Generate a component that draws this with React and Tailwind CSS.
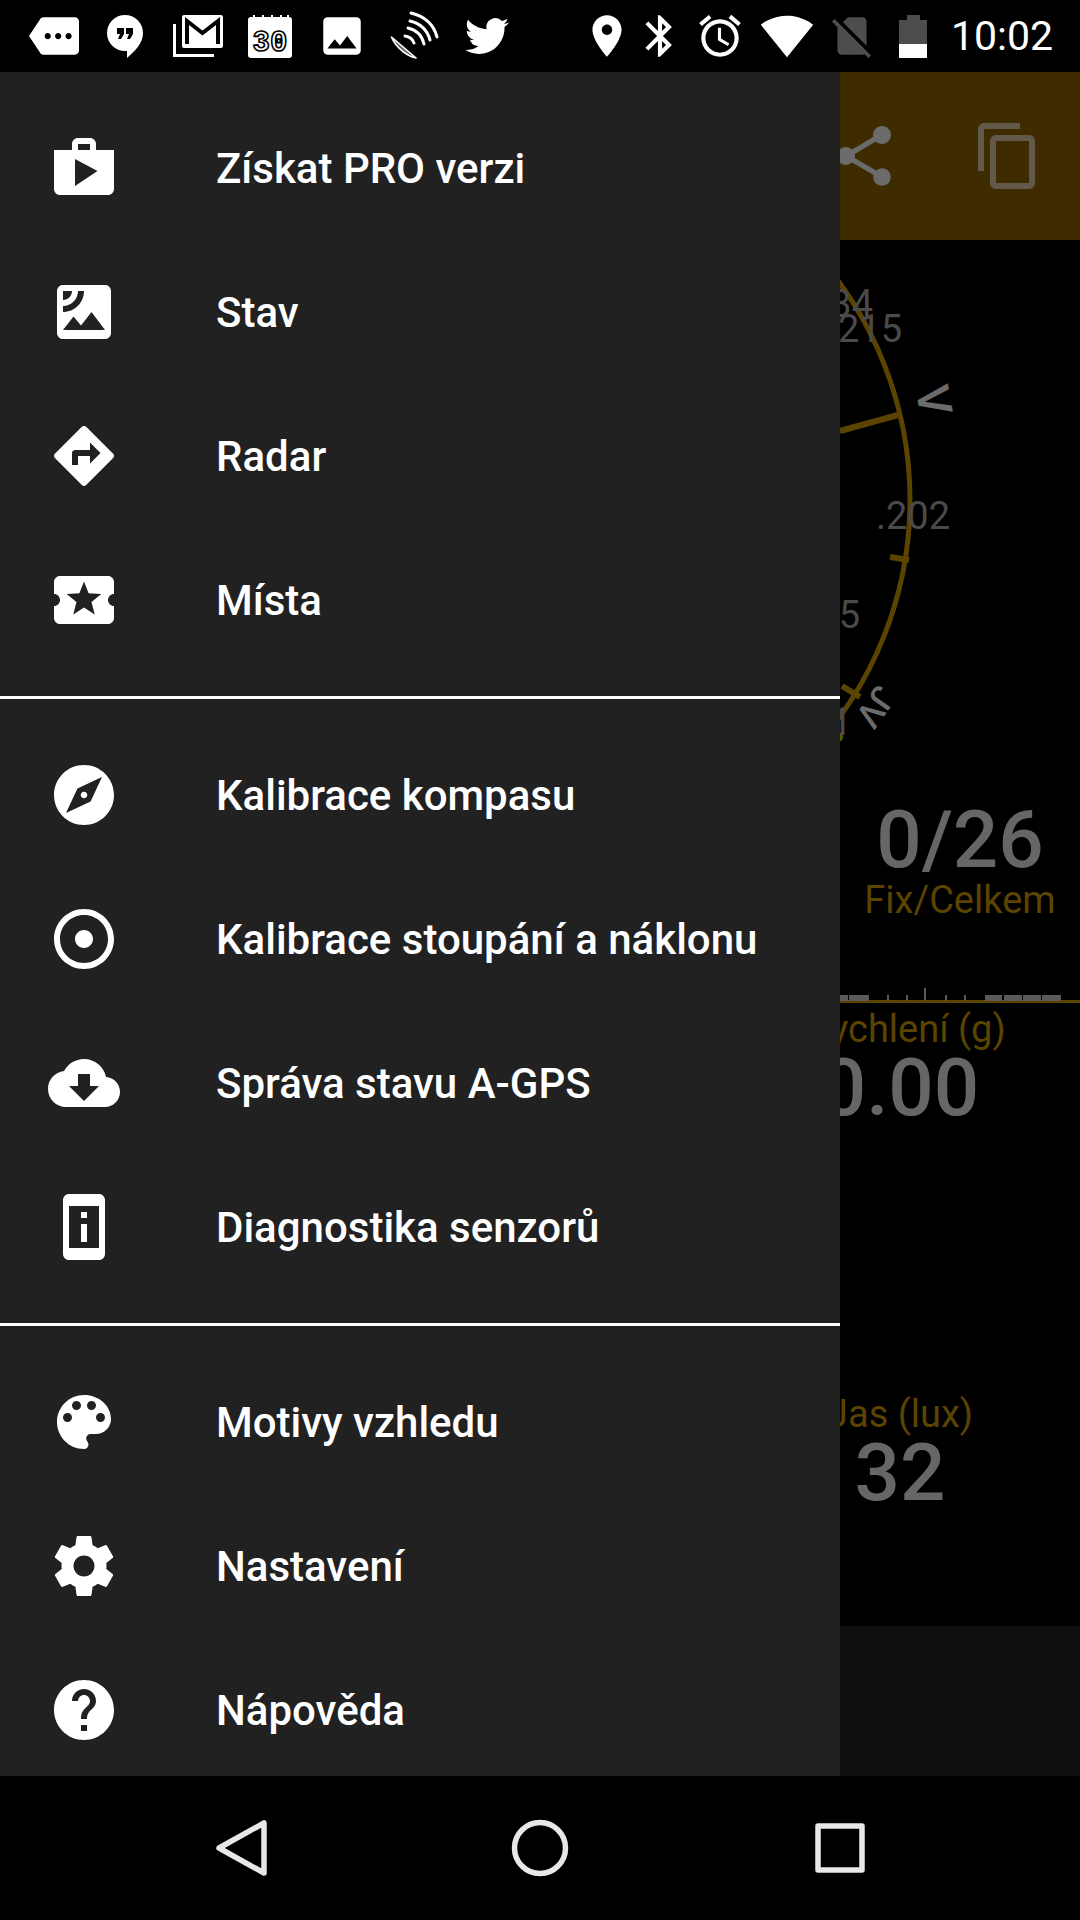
import React from "react";

const ICONS = {
  shop: "M16 6V4c0-1.11-.89-2-2-2h-4c-1.11 0-2 .89-2 2v2H2v13c0 1.11.89 2 2 2h16c1.11 0 2-.89 2-2V6h-6zm-6-2h4v2h-4V4zM9 18V9l7.5 4L9 18z",
  satellite: "M19 3H5c-1.1 0-2 .9-2 2v14c0 1.1.9 2 2 2h14c1.1 0 2-.9 2-2V5c0-1.1-.9-2-2-2zM5 4.99h3C8 6.65 6.65 8 5 8V4.99zM5 12v-2c2.76 0 5-2.25 5-5.01h2C12 8.86 8.87 12 5 12zm0 6l3.5-4.5 2.5 3.01L14.5 12l4.5 6H5z",
  directions: "M21.71 11.29l-9-9c-.39-.39-1.02-.39-1.41 0l-9 9c-.39.39-.39 1.02 0 1.41l9 9c.39.39 1.02.39 1.41 0l9-9c.39-.38.39-1.01 0-1.41zM14 14.5V12h-4v3H8v-4c0-.55.45-1 1-1h5V7.5l3.5 3.5-3.5 3.5z",
  ticket: "M20 12c0-1.1.9-2 2-2V6c0-1.1-.9-2-2-2H4c-1.1 0-1.99.9-1.99 2v4c1.1 0 1.99.9 1.99 2s-.89 2-2 2v4c0 1.1.9 2 2 2h16c1.1 0 2-.9 2-2v-4c-1.1 0-2-.9-2-2zm-4.42 4.8L12 14.5l-3.58 2.3 1.08-4.12-3.29-2.69 4.24-.25L12 5.8l1.54 3.95 4.24.25-3.29 2.69 1.09 4.11z",
  explore: "M12 10.9c-.61 0-1.1.49-1.1 1.1s.49 1.1 1.1 1.1c.61 0 1.1-.49 1.1-1.1s-.49-1.1-1.1-1.1zM12 2C6.48 2 2 6.48 2 12s4.48 10 10 10 10-4.48 10-10S17.52 2 12 2zm2.19 12.19L6 18l3.81-8.19L18 6l-3.81 8.19z",
  adjust: "M12 2C6.49 2 2 6.49 2 12s4.49 10 10 10 10-4.49 10-10S17.51 2 12 2zm0 18c-4.41 0-8-3.59-8-8s3.59-8 8-8 8 3.59 8 8-3.59 8-8 8zm3-8c0 1.66-1.34 3-3 3s-3-1.34-3-3 1.34-3 3-3 3 1.34 3 3z",
  cloud: "M19.35 10.04C18.67 6.59 15.64 4 12 4 9.11 4 6.6 5.64 5.35 8.04 2.34 8.36 0 10.91 0 14c0 3.31 2.69 6 6 6h13c2.76 0 5-2.24 5-5 0-2.64-2.05-4.78-4.65-4.96zM17 13l-5 5-5-5h3V9h4v4h3z",
  device: "M13 7h-2v2h2V7zm0 4h-2v6h2v-6zm4-9.99L7 1c-1.1 0-2 .9-2 2v18c0 1.1.9 2 2 2h10c1.1 0 2-.9 2-2V3c0-1.1-.9-1.99-2-1.99zM17 19H7V5h10v14z",
  palette: "M12 3c-4.97 0-9 4.03-9 9s4.03 9 9 9c.83 0 1.5-.67 1.5-1.5 0-.39-.15-.74-.39-1.01-.23-.26-.38-.61-.38-.99 0-.83.67-1.5 1.5-1.5H16c2.76 0 5-2.24 5-5 0-4.42-4.03-8-9-8zm-5.5 9c-.83 0-1.5-.67-1.5-1.5S5.67 9 6.5 9 8 9.67 8 10.5 7.33 12 6.5 12zm3-4C8.67 8 8 7.33 8 6.5S8.67 5 9.5 5s1.5.67 1.5 1.5S10.33 8 9.5 8zm5 0c-.83 0-1.5-.67-1.5-1.5S13.67 5 14.5 5s1.5.67 1.5 1.5S15.33 8 14.5 8zm3 4c-.83 0-1.5-.67-1.5-1.5S16.67 9 17.5 9s1.5.67 1.5 1.5-.67 1.5-1.5 1.5z",
  settings: "M19.43 12.98c.04-.32.07-.64.07-.98s-.03-.66-.07-.98l2.11-1.65c.19-.15.24-.42.12-.64l-2-3.46c-.12-.22-.39-.3-.61-.22l-2.49 1c-.52-.4-1.08-.73-1.69-.98l-.38-2.65C14.46 2.18 14.25 2 14 2h-4c-.25 0-.46.18-.49.42l-.38 2.65c-.61.25-1.17.59-1.69.98l-2.49-1c-.23-.09-.49 0-.61.22l-2 3.46c-.13.22-.07.49.12.64l2.11 1.65c-.04.32-.07.65-.07.98s.03.66.07.98l-2.11 1.65c-.19.15-.24.42-.12.64l2 3.46c.12.22.39.3.61.22l2.49-1c.52.4 1.08.73 1.69.98l.38 2.65c.03.24.24.42.49.42h4c.25 0 .46-.18.49-.42l.38-2.65c.61-.25 1.17-.59 1.69-.98l2.49 1c.23.09.49 0 .61-.22l2-3.46c.12-.22.07-.49-.12-.64l-2.11-1.65zM12 15.5c-1.93 0-3.5-1.57-3.5-3.5s1.57-3.5 3.5-3.5 3.5 1.57 3.5 3.5-1.57 3.5-3.5 3.5z",
  help: "M12 2C6.48 2 2 6.48 2 12s4.48 10 10 10 10-4.48 10-10S17.52 2 12 2zm1 17h-2v-2h2v2zm2.07-7.75l-.9.92C13.45 12.9 13 13.5 13 15h-2v-.5c0-1.1.45-2.1 1.17-2.83l1.24-1.26c.37-.36.59-.86.59-1.41 0-1.1-.9-2-2-2s-2 .9-2 2H8c0-2.21 1.79-4 4-4s4 1.79 4 4c0 .88-.36 1.68-.93 2.25z",
  more: "M22 3H7c-.69 0-1.23.35-1.59.88L0 12l5.41 8.11c.36.53.97.89 1.66.89H22c1.1 0 2-.9 2-2V5c0-1.1-.9-2-2-2zM9 13.5c-.83 0-1.5-.67-1.5-1.5s.67-1.5 1.5-1.5 1.5.67 1.5 1.5-.67 1.5-1.5 1.5zm5 0c-.83 0-1.5-.67-1.5-1.5s.67-1.5 1.5-1.5 1.5.67 1.5 1.5-.67 1.5-1.5 1.5zm5 0c-.83 0-1.5-.67-1.5-1.5s.67-1.5 1.5-1.5 1.5.67 1.5 1.5-.67 1.5-1.5 1.5z",
  image: "M21 19V5c0-1.1-.9-2-2-2H5c-1.1 0-2 .9-2 2v14c0 1.1.9 2 2 2h14c1.1 0 2-.9 2-2zM8.5 13.5l2.5 3.01L14.5 12l4.5 6H5l3.5-4.5z",
  twitter: "M23.953 4.57a10 10 0 01-2.825.775 4.958 4.958 0 002.163-2.723c-.951.555-2.005.959-3.127 1.184a4.92 4.92 0 00-8.384 4.482C7.69 8.095 4.067 6.13 1.64 3.162a4.822 4.822 0 00-.666 2.475c0 1.71.87 3.213 2.188 4.096a4.904 4.904 0 01-2.228-.616v.06a4.923 4.923 0 003.946 4.827 4.996 4.996 0 01-2.212.085 4.936 4.936 0 004.604 3.417 9.867 9.867 0 01-6.102 2.105c-.39 0-.779-.023-1.17-.067a13.995 13.995 0 007.557 2.209c9.053 0 13.998-7.496 13.998-13.985 0-.21 0-.42-.015-.63A9.935 9.935 0 0024 4.59z",
  place: "M12 2C8.13 2 5 5.13 5 9c0 5.25 7 13 7 13s7-7.75 7-13c0-3.87-3.13-7-7-7zm0 9.5c-1.38 0-2.5-1.12-2.5-2.5s1.12-2.5 2.5-2.5 2.5 1.12 2.5 2.5-1.12 2.5-2.5 2.5z",
  bluetooth: "M17.71 7.71L12 2h-1v7.59L6.41 5 5 6.41 10.59 12 5 17.59 6.41 19 11 14.41V22h1l5.71-5.71-4.3-4.29 4.3-4.29zM13 5.83l1.88 1.88L13 9.59V5.83zm1.88 10.46L13 18.17v-3.76l1.88 1.88z",
  alarm: "M22 5.72l-4.6-3.86-1.29 1.53 4.6 3.86L22 5.72zM7.88 3.39L6.6 1.86 2 5.71l1.29 1.53 4.59-3.85zM12.5 8H11v6l4.75 2.85.75-1.23-4-2.37V8zM12 4c-4.97 0-9 4.03-9 9s4.03 9 9 9c4.97 0 9-4.03 9-9s-4.03-9-9-9zm0 16c-3.87 0-7-3.13-7-7s3.13-7 7-7 7 3.13 7 7-3.13 7-7 7z",
  wifi: "M12.01 21.49L23.64 7c-.45-.34-4.93-4-11.64-4C5.28 3 .81 6.66.36 7l11.63 14.49.01.01.01-.01z",
  noSim: "M18.99 5c0-1.1-.89-2-1.99-2h-7L7.66 5.34 19 16.68 18.99 5zM3.65 3.88L2.38 5.15 5 7.77V19c0 1.1.9 2 2 2h10.01c.35 0 .67-.1.96-.26l1.88 1.88 1.27-1.27L3.65 3.88z",
  share: "M18 16.08c-.76 0-1.44.3-1.96.77L8.91 12.7c.05-.23.09-.46.09-.7s-.04-.47-.09-.7l7.05-4.11c.54.5 1.25.81 2.04.81 1.66 0 3-1.34 3-3s-1.34-3-3-3-3 1.34-3 3c0 .24.04.47.09.7L8.04 9.81C7.5 9.31 6.79 9 6 9c-1.66 0-3 1.34-3 3s1.34 3 3 3c.79 0 1.5-.31 2.04-.81l7.12 4.16c-.05.21-.08.43-.08.65 0 1.61 1.31 2.92 2.92 2.92 1.61 0 2.92-1.31 2.92-2.92s-1.31-2.92-2.92-2.92z",
  copy: "M16 1H4c-1.1 0-2 .9-2 2v14h2V3h12V1zm3 4H8c-1.1 0-2 .9-2 2v14c0 1.1.9 2 2 2h11c1.1 0 2-.9 2-2V7c0-1.1-.9-2-2-2zm0 16H8V7h11v14z",
};

const SECTIONS = [
  [
    { icon: "shop", label: "Získat PRO verzi" },
    { icon: "satellite", label: "Stav" },
    { icon: "directions", label: "Radar" },
    { icon: "ticket", label: "Místa" },
  ],
  [
    { icon: "explore", label: "Kalibrace kompasu" },
    { icon: "adjust", label: "Kalibrace stoupání a náklonu" },
    { icon: "cloud", label: "Správa stavu A-GPS" },
    { icon: "device", label: "Diagnostika senzorů" },
  ],
  [
    { icon: "palette", label: "Motivy vzhledu" },
    { icon: "settings", label: "Nastavení" },
    { icon: "help", label: "Nápověda" },
  ],
];

function Icon({ name, className }) {
  return (
    <svg viewBox="0 0 24 24" className={className} fill="currentColor">
      <path d={ICONS[name]} />
    </svg>
  );
}

function StatusBar() {
  return (
    <div className="flex h-[72px] shrink-0 items-center bg-black text-white">
      <Icon name="more" className="ml-[29px] h-[50px] w-[50px]" />
      <svg viewBox="0 0 36 43" className="ml-[28px] h-[43px] w-[36px]" fill="white">
        <path d="M18 0A18 18 0 0 1 36 18C36 28 28 36 20 43V36H18A18 18 0 0 1 18 0Z" />
        <path d="M10 13h7v6l-3 5h-3l2-5h-3zM19 13h7v6l-3 5h-3l2-5h-3z" fill="black" />
      </svg>
      <svg viewBox="0 0 50 42" className="ml-[30px] h-[42px] w-[50px]" fill="none">
        <path d="M1.5 9V40.5H41" stroke="white" strokeWidth="3" />
        <rect x="9" y="0" width="41" height="33" rx="2" fill="white" />
        <path d="M14 29V6L29.5 18L45 6V29" stroke="black" strokeWidth="4" />
      </svg>
      <svg viewBox="0 0 44 43" className="ml-[25px] h-[43px] w-[44px]">
        <rect x="0" y="2" width="44" height="41" rx="3" fill="white" />
        <path d="M6 0v3M15 0v3M24 0v3M33 0v3M40 0v3" stroke="white" strokeWidth="2" />
        <text x="22" y="36" textAnchor="middle" fontSize="29" fontWeight="700" fill="white" stroke="black" strokeWidth="1.6" className="font-['Liberation_Mono',monospace]">30</text>
      </svg>
      <Icon name="image" className="ml-[25px] h-[50px] w-[50px]" />
      <svg viewBox="0 0 60 56" className="ml-[18px] h-[56px] w-[60px]" fill="none">
        <path d="M6.5 29A24 14 42 0 0 31 50Z" fill="#6b6b6b" stroke="white" strokeWidth="1.6" strokeLinejoin="round" />
        <path d="M20 28Q27 29 29 35M23 20Q36 23 39 36M26 5Q47 10 52 29" stroke="white" strokeWidth="3" strokeLinecap="round" />
        <path d="M25 13Q41 17 45 32" stroke="white" strokeWidth="3" strokeLinecap="round" />
      </svg>
      <Icon name="twitter" className="ml-[20px] h-[44px] w-[44px]" />
      <Icon name="place" className="ml-[73px] h-[50px] w-[50px]" />
      <Icon name="bluetooth" className="ml-[3px] h-[50px] w-[50px]" />
      <Icon name="alarm" className="ml-[10px] h-[50px] w-[50px]" />
      <Icon name="wifi" className="ml-[15px] h-[54px] w-[54px]" />
      <Icon name="noSim" className="ml-[13px] h-[50px] w-[50px] text-[#4d4d4d]" />
      <div className="ml-[22px] flex h-[43px] w-[28px] flex-col items-center">
        <div className="h-[5px] w-[13px] bg-[#4d4d4d]" />
        <div className="h-[24px] w-full bg-[#4d4d4d]" />
        <div className="h-[14px] w-full bg-white" />
      </div>
      <span className="ml-[24px] text-[41px] leading-none">10:02</span>
    </div>
  );
}

function Gauge() {
  const labelFont = "text-[38px] fill-[#4a4a4a]";
  return (
    <svg viewBox="0 240 1080 520" className="block h-[520px] w-full shrink-0" fill="none">
      <circle cx="540" cy="500" r="370" stroke="#5b4300" strokeWidth="5" />
      <path d="M840 431L898 415M890 557L909 560M842 686L860 697" stroke="#5b4300" strokeWidth="6" />
      <circle cx="838" cy="737" r="5" fill="#5b5b00" />
      <text x="873" y="317" textAnchor="end" className={labelFont}>34</text>
      <text x="902" y="342" textAnchor="end" className={labelFont}>215</text>
      <text x="950" y="529" textAnchor="end" className={labelFont}>.202</text>
      <text x="860" y="628" textAnchor="end" className={labelFont}>5</text>
      <text x="852" y="735" textAnchor="end" className={labelFont}>1</text>
      <text transform="translate(918 403) rotate(80)" textAnchor="middle" className="fill-[#6b6b6b] text-[46px] font-medium" y="0">V</text>
      <text transform="translate(866 700) rotate(125)" textAnchor="middle" className="fill-[#6b6b6b] text-[34px] font-medium">JV</text>
    </svg>
  );
}

function SatelliteStrip() {
  const bars = [[840, 8], [849, 20], [985, 17], [1004, 18], [1023, 18], [1042, 19]];
  const ticks = [887, 906, 945, 964];
  return (
    <svg viewBox="0 985 1080 18" className="block h-[18px] w-full shrink-0">
      <rect x="0" y="1000" width="1080" height="3" fill="#5b4300" />
      {bars.map(([x, w]) => (
        <rect key={x} x={x} y="995" width={w} height="6" fill="#5a5a5a" />
      ))}
      {ticks.map((x) => (
        <rect key={x} x={x} y="995" width="2" height="6" fill="#5a5a5a" />
      ))}
      <rect x="924" y="988" width="2" height="13" fill="#5a5a5a" />
    </svg>
  );
}

function Stat({ label, value, className }) {
  return (
    <div className={"text-center " + className}>
      <div className="text-[38px] leading-[38px] whitespace-nowrap text-[#5b4300]">{label}</div>
      <div className="text-[80px] leading-[80px] font-medium text-[#666666]">{value}</div>
    </div>
  );
}

function Dashboard() {
  return (
    <div className="flex h-full flex-col bg-black">
      <div className="flex h-[168px] shrink-0 items-center justify-end gap-[72px] bg-[#3f2b00] pr-[36px]">
        <Icon name="share" className="h-[72px] w-[72px] text-[#6b6b6b]" />
        <Icon name="copy" className="h-[72px] w-[72px] text-[#63594a]" />
      </div>
      <Gauge />
      <div className="flex h-[225px] shrink-0 justify-end pt-[40px]">
        <div className="w-[240px] text-center">
          <div className="text-[80px] leading-[80px] font-medium text-[#666666]">0/26</div>
          <div className="mt-px text-[38px] leading-[38px] text-[#5b4300]">Fix/Celkem</div>
        </div>
      </div>
      <SatelliteStrip />
      <div className="grid flex-1 grid-cols-3 pt-[7px]">
        <div className="col-start-3 flex flex-col items-center">
          <Stat label="Zrychlení (g)" value="0.00" />
          <Stat label="Jas (lux)" value="32" className="mt-[267px]" />
        </div>
      </div>
      <div className="h-[150px] shrink-0 bg-[#0f0f0f]" />
    </div>
  );
}

function Drawer() {
  return (
    <div className="absolute top-0 bottom-0 left-0 w-[840px] overflow-hidden bg-[#212121] text-white">
      {SECTIONS.map((section, i) => (
        <div key={i} className={i > 0 ? "border-t-[3px] border-white py-[24px]" : "py-[24px]"}>
          {section.map((item) => (
            <div key={item.label} className="flex h-[144px] items-center pl-[48px]">
              <Icon name={item.icon} className="h-[72px] w-[72px] shrink-0" />
              <span className="ml-[96px] text-[42px] font-medium">{item.label}</span>
            </div>
          ))}
        </div>
      ))}
    </div>
  );
}

function NavBar() {
  return (
    <div className="flex h-[144px] shrink-0 items-center justify-center gap-[228px] bg-black">
      <svg viewBox="0 0 72 72" className="h-[72px] w-[72px]" fill="none" stroke="#e8e8e8" strokeWidth="5.5" strokeLinejoin="round">
        <path d="M60 11V61L15 36Z" transform="translate(0 0)" />
      </svg>
      <svg viewBox="0 0 72 72" className="h-[72px] w-[72px]" fill="none" stroke="#e8e8e8" strokeWidth="5.5">
        <circle cx="36" cy="36" r="25.5" />
      </svg>
      <svg viewBox="0 0 72 72" className="h-[72px] w-[72px]" fill="none" stroke="#e8e8e8" strokeWidth="5.5" strokeLinejoin="round">
        <rect x="14" y="14" width="44" height="44" />
      </svg>
    </div>
  );
}

export default function App() {
  return (
    <div className="flex h-[1920px] w-[1080px] flex-col overflow-hidden bg-black font-['Roboto',sans-serif]">
      <StatusBar />
      <div className="relative min-h-0 flex-1">
        <Dashboard />
        <Drawer />
      </div>
      <NavBar />
    </div>
  );
}
